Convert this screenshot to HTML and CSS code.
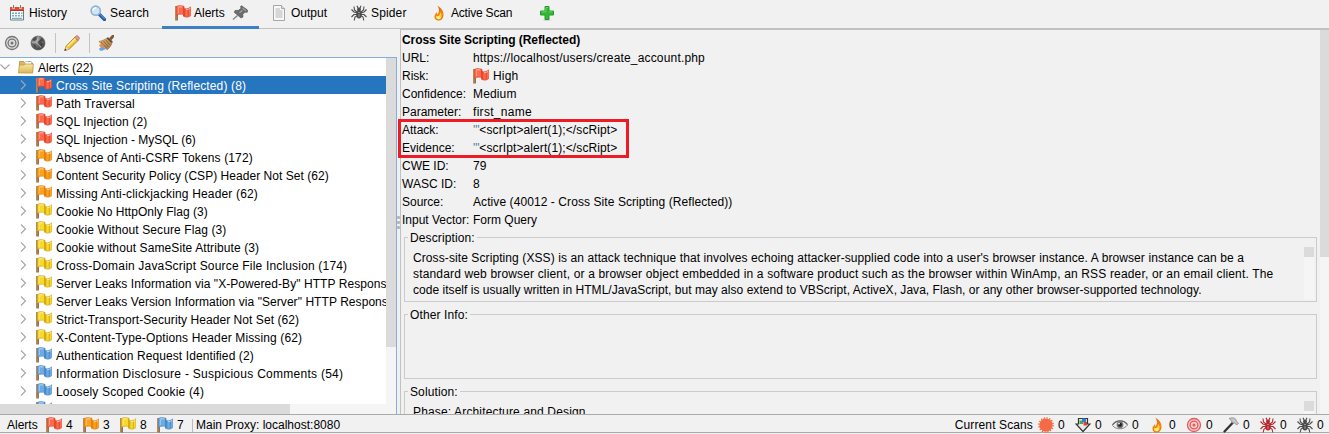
FILE: index.html
```
<!DOCTYPE html>
<html lang="en">
<head>
<meta charset="utf-8">
<title>Alerts</title>
<link rel="stylesheet" href="styles.css">
</head>
<body>
<svg class="defs" aria-hidden="true">
  <defs>
    <linearGradient id="fire" x1="0" y1="0" x2="0" y2="1"><stop offset="0" stop-color="#e35a10"/><stop offset=".55" stop-color="#f58a12"/><stop offset="1" stop-color="#e86a00"/></linearGradient>
    <linearGradient id="folder-g" x1="0" y1="0" x2="0" y2="1"><stop offset="0" stop-color="#fbe6a6"/><stop offset="1" stop-color="#dcb654"/></linearGradient>
    <linearGradient id="broom-g" x1="0" y1="0" x2="1" y2="1"><stop offset="0" stop-color="#e0b880"/><stop offset="1" stop-color="#a87238"/></linearGradient>
    <radialGradient id="globe-g" cx=".4" cy=".3" r=".8"><stop offset="0" stop-color="#aaa"/><stop offset="1" stop-color="#333"/></radialGradient>
    <symbol id="flag" viewBox="0 0 16 16">
      <path d="M1 1v14.500" stroke="#b58a5c" stroke-width="2"/>
      <path d="M2.300 9v6.500" stroke="#7b5230" stroke-width="1"/>
      <path class="flag-cloth" d="M1.500 1.300C3.500.3 6 .3 9 1.300V3.500C11.500 4.300 13.800 3.500 15.700 1.800V10.800C13.500 12.500 11 12.600 8.500 11.300V9.600C6 8.800 3.500 9.200 1.500 10.300Z"/>
      <path class="flag-fold" d="M8 1.200 9.200 1.500V3.600L10.300 3.800V11.800L8 11V9.500ZM12.800 3.500l1-.5v8.500l-1 .4Z"/>
      <path d="M3 2.300C4.500 1.700 6 1.700 7.300 2M11 4.600c1.500.1 2.700-.3 4-1.200" stroke="#fff" stroke-opacity=".6" stroke-width=".9" fill="none"/>
      <path d="M3.500 8V3" stroke="#fff" stroke-opacity=".3"/>
    </symbol>
    <symbol id="calendar" viewBox="0 0 16 16">
      <path d="M1.500 2.500h13v12.500h-13z" fill="#f5faff" stroke="#5f8199"/>
      <path d="M1 2h14v4H1z" fill="#e04a38"/><path d="M1 5.500h14" stroke="#b03a30"/>
      <path d="M4.500 0v4M11.500 0v4" stroke="#fff" stroke-width="2"/><path d="M4.500 0v3.500M11.500 0v3.500" stroke="#777"/>
      <path d="M3 7.500h2V9H3zm3 0h2V9H6zm3 0h2V9H9zM3 10h2v1.500H3zm3 0h2v1.500H6zm3 0h2v1.500H9z" fill="#79a5c7"/><path d="M12 7.500h1.500V9H12zm0 2.500h1.500v1.500H12zM3 12.700h10v1.200H3z" fill="#91ab9b"/>
    </symbol>
    <symbol id="search" viewBox="0 0 16 16">
      <path d="m9.500 9.500 5 5" stroke="#2859a7" stroke-width="3.200" stroke-linecap="round"/><path d="m10 9.300 4.700 4.700" stroke="#6aa2e5" stroke-width="1"/>
      <circle cx="5.700" cy="5.700" r="4.600" fill="#cfe5f7" stroke="#8fb0cf" stroke-width="1.600"/><path d="M3 5.500c.3-1.800 1.500-2.700 3-2.700" stroke="#fff" stroke-width="1.300" fill="none"/>
    </symbol>
    <symbol id="pin" viewBox="0 0 16 16">
      <path d="m5.500 10.500-4.500 4" stroke="#888" stroke-width="1.500"/>
      <path d="M9.500.7 15.500 5 15.300 7.300 13 7.200 10.800 9.300 11 12 9 13 2.200 7.300 3 5.500 6.500 5.300 9 3.300 8.500 1.500Z" fill="#6c6c6c" stroke="#505050" stroke-width=".6"/><path d="m7.500 7.700 3-2.500M10.500 3l3.500 2.700" stroke="#a0a0a0" stroke-width="1.200"/>
    </symbol>
    <symbol id="document" viewBox="0 0 16 16">
      <path d="M2.500.5h8l3 3v12h-11z" fill="#f8f8f8" stroke="#a6a6a6"/><path d="M10.500.5v3h3" fill="#ddd" stroke="#a6a6a6"/>
      <path d="M4.500 4h4.500M4.500 6h7M4.500 8h7M4.500 10h7M4.500 12h7" stroke="#b5b5b5"/>
    </symbol>
    <symbol id="spider" viewBox="0 0 16 16">
      <path d="M6 7 3.500 5 3 1.500M10 7l2.500-2 .5-3.500M6 8 3 7 .5 4.500M10 8l3-1 2.500-2.500M6 9.500 3 9.500.5 12M10 9.500h3l2.500 2.500M6.500 10.500 4 12l-.8 3.500M9.500 10.500 12 12l.8 3.500M7 3 6 .8M9 3l1-2.200" fill="none" stroke="currentColor" stroke-width="1.100"/>
      <circle cx="8" cy="4.600" r="2" fill="currentColor"/><ellipse cx="8" cy="9.500" rx="2.700" ry="4" fill="currentColor"/><path d="M7 8c.4-.8 1.500-.8 2 0M8 9v3" stroke="#fff" stroke-opacity=".45" fill="none"/>
    </symbol>
    <symbol id="flame" viewBox="0 0 16 16">
      <path d="M6.300.5C11 3.500 13 7 12.500 10.800 12 14 10 15.500 7.700 15.500 4.800 15.500 3.300 13.500 3.500 11.200 3.700 9 5 8.400 5.700 7.200 6.200 8 6 8.700 6.300 9.400 8.500 7.200 8.600 4 6.300.5Z" fill="url(#fire)"/>
      <path d="M9.300 7C9.500 9.500 8 10 7.300 11.300L5.300 10.700C4 13 5.800 14.500 7.800 14.500 10.500 14.500 11.700 11 9.300 7Z" fill="#ffd83c"/><ellipse cx="7.800" cy="12.600" rx="1.500" ry="1.500" fill="#fff4a0"/>
    </symbol>
    <symbol id="plus" viewBox="0 0 16 16">
      <ellipse cx="8" cy="15" rx="4" ry=".8" fill="#ccc"/><path d="M6 1.500h4V6h4.500v4H10v4.500H6V10H1.500V6H6z" fill="#35b735" stroke="#219a30"/><path d="M6.800 2.500h2.400M2.500 6.800h4.300V3M10 6.800h3.500" stroke="#76d96d" fill="none" stroke-width=".8"/>
    </symbol>
    <symbol id="target" viewBox="0 0 16 16">
      <circle cx="8" cy="8" r="6.500" fill="var(--paper)" stroke="currentColor" stroke-width="1.300"/><circle cx="8" cy="8" r="3.900" fill="none" stroke="currentColor" stroke-width="1.300"/><circle cx="8" cy="8" r="1.500" fill="currentColor"/>
    </symbol>
    <symbol id="globe" viewBox="0 0 16 16">
      <circle cx="8" cy="8" r="7" fill="url(#globe-g)" stroke="#555" stroke-width=".6"/><path d="m2 5 3-3 2 .5-.5 2.500-2 1ZM8 7l3.500-4 2 2.500L11 7l2 2-2 3-2-2ZM3 9l3 1-.5 3Z" fill="#333" fill-opacity=".7"/><path d="M2 7.500c3-1 6 0 9 5M8.500 1.500 6.500 7" stroke="#bbb" fill="none" stroke-width=".9"/>
    </symbol>
    <symbol id="pencil" viewBox="0 0 16 16">
      <path d="M.8 15.500 2 11.300l8.800-9L14 5.500l-9 8.800Z" fill="#f3c52d" stroke="#9a6c22" stroke-width=".8"/><path d="m10.800 2.300 1.500-1.500c1-.7 3.800 1.700 3 3L14 5.500Z" fill="#ec9b8d" stroke="#a35e50" stroke-width=".7"/><path d="m3.500 11.500 8-8" stroke="#fff29a" stroke-width="1.300"/><path d="m.8 15.500 1.200-4 3 2.800Z" fill="#f2d6a5"/><path d="m.4 15.800.7-2.300 1.600 1.500Z" fill="#333"/>
    </symbol>
    <symbol id="broom" viewBox="0 0 16 16">
      <path d="m12 4.500 3.200-3.500" stroke="#7d5c3c" stroke-width="3" stroke-linecap="round"/><path d="M1 6.500C4 6 7 4.500 10 2.500l4.500 3.800c-.7 3.500-2.500 6.500-5.500 8.500Z" fill="url(#broom-g)" stroke="#96663a" stroke-width=".6"/><path d="m3 7 5.500 6M5.500 6l4.800 6M7.800 5l4 5" stroke="#7e5228" stroke-width=".7"/><path d="m9.300 3 4.500 4.200" stroke="#4f4238" stroke-width="1.300"/><path d="m.8 10 3.700-1.500L6.500 12l-3 1.500Z" fill="#f28a3a"/><path d="m1 13.500 4-2 3 2.500-4 1.800H2Z" fill="#6aa5e5"/>
    </symbol>
    <symbol id="folder" viewBox="0 0 16 16">
      <path d="M1.500 13V2.500h4l1 1.500h8v9Z" fill="#dcb961" stroke="#b08b43" stroke-width=".8"/><path d="M7 2.500h6.500V6H7z" fill="#fff" stroke="#bba773" stroke-width=".5"/><path d="M10 2h2.500v1H10z" fill="#6aaed6"/><path d="M.5 14 1.300 6h5l1-1h8l-.6 9Z" fill="url(#folder-g)" stroke="#bd9948" stroke-width=".8"/>
    </symbol>
    <symbol id="burst" viewBox="0 0 16 16">
      <circle cx="8" cy="8" r="6.600" fill="#f66b45"/><circle cx="8" cy="8" r="7.100" fill="none" stroke="#ee6642" stroke-width="1.400" stroke-dasharray="1.400 1.400"/>
    </symbol>
    <symbol id="download" viewBox="0 0 16 16">
      <path d="M3.500 1.500h9V7H15l-7 7.500L1 7h2.500Z" fill="#e9e9e9" stroke="#333" stroke-width="1.200"/><path d="M4.500 3.500H8V7H4.500z" fill="#4aa94e"/><path d="M7 1.500h4V5H7z" fill="#377fc4"/><path d="M8.500 5H12v3.500H8.500z" fill="#d4453a"/>
    </symbol>
    <symbol id="eye" viewBox="0 0 16 16">
      <path d="M.5 8.500C4 2.500 12 2.500 15.500 8 12 13 4 13 .5 8.500Z" fill="#eee" stroke="#888" stroke-width="1"/><path d="M.5 7.800C4 2.500 12 2.500 15.500 7.500" fill="none" stroke="#666" stroke-width="1.200"/><circle cx="8" cy="7.800" r="3.400" fill="#777"/><circle cx="8" cy="7.800" r="2" fill="#222"/><circle cx="7" cy="6.600" r=".9" fill="#fff"/>
    </symbol>
    <symbol id="hammer" viewBox="0 0 16 16">
      <path d="m1.500 14.500 8-8.500" stroke="#333" stroke-width="2.300" stroke-linecap="round"/><path d="M6 1.500c3-1.200 5.500-.8 7 1l.2 1.500 2.300 2-1.700 2-2.400-2-1.600.2L8.300 4C8 2.700 7.200 2.200 6 1.500Z" fill="#c5c5c5" stroke="#858585" stroke-width=".7"/>
    </symbol>
  </defs>
</svg>

<div class="app">
  <nav class="tabs">
    <div class="tab tab-history"><svg class="icon"><use href="#calendar"/></svg><span>History</span></div>
    <div class="tab tab-search"><svg class="icon"><use href="#search"/></svg><span>Search</span></div>
    <div class="tab tab-alerts active"><svg class="icon high"><use href="#flag"/></svg><span>Alerts</span><svg class="icon pin"><use href="#pin"/></svg></div>
    <div class="tab tab-output"><svg class="icon"><use href="#document"/></svg><span>Output</span></div>
    <div class="tab tab-spider"><svg class="icon spider"><use href="#spider"/></svg><span>Spider</span></div>
    <div class="tab tab-scan"><svg class="icon"><use href="#flame"/></svg><span>Active Scan</span></div>
    <div class="tab tab-add"><svg class="icon"><use href="#plus"/></svg></div>
  </nav>

  <main class="split">
    <section class="left">
      <div class="toolbar">
        <svg class="icon target-gray"><use href="#target"/></svg>
        <svg class="icon"><use href="#globe"/></svg>
        <i class="rule"></i>
        <svg class="icon"><use href="#pencil"/></svg>
        <i class="rule"></i>
        <svg class="icon"><use href="#broom"/></svg>
      </div>
      <div class="tree">
        <div class="rows">
          <div class="row root"><svg class="chevron" viewBox="0 0 10 10"><path d="m.5 2.500 4.500 4.500 4.500-4.500"/></svg><svg class="icon"><use href="#folder"/></svg><span>Alerts (22)</span></div>
          <div class="row selected"><svg class="chevron" viewBox="0 0 10 10"><path d="m3 .5 4.500 4.500L3 9.500"/></svg><svg class="icon high"><use href="#flag"/></svg><span>Cross Site Scripting (Reflected) (8)</span></div>
          <div class="row"><svg class="chevron" viewBox="0 0 10 10"><path d="m3 .5 4.500 4.500L3 9.500"/></svg><svg class="icon high"><use href="#flag"/></svg><span>Path Traversal</span></div>
          <div class="row"><svg class="chevron" viewBox="0 0 10 10"><path d="m3 .5 4.500 4.500L3 9.500"/></svg><svg class="icon high"><use href="#flag"/></svg><span>SQL Injection (2)</span></div>
          <div class="row"><svg class="chevron" viewBox="0 0 10 10"><path d="m3 .5 4.500 4.500L3 9.500"/></svg><svg class="icon high"><use href="#flag"/></svg><span>SQL Injection - MySQL (6)</span></div>
          <div class="row"><svg class="chevron" viewBox="0 0 10 10"><path d="m3 .5 4.500 4.500L3 9.500"/></svg><svg class="icon medium"><use href="#flag"/></svg><span>Absence of Anti-CSRF Tokens (172)</span></div>
          <div class="row"><svg class="chevron" viewBox="0 0 10 10"><path d="m3 .5 4.500 4.500L3 9.500"/></svg><svg class="icon medium"><use href="#flag"/></svg><span>Content Security Policy (CSP) Header Not Set (62)</span></div>
          <div class="row"><svg class="chevron" viewBox="0 0 10 10"><path d="m3 .5 4.500 4.500L3 9.500"/></svg><svg class="icon medium"><use href="#flag"/></svg><span>Missing Anti-clickjacking Header (62)</span></div>
          <div class="row"><svg class="chevron" viewBox="0 0 10 10"><path d="m3 .5 4.500 4.500L3 9.500"/></svg><svg class="icon low"><use href="#flag"/></svg><span>Cookie No HttpOnly Flag (3)</span></div>
          <div class="row"><svg class="chevron" viewBox="0 0 10 10"><path d="m3 .5 4.500 4.500L3 9.500"/></svg><svg class="icon low"><use href="#flag"/></svg><span>Cookie Without Secure Flag (3)</span></div>
          <div class="row"><svg class="chevron" viewBox="0 0 10 10"><path d="m3 .5 4.500 4.500L3 9.500"/></svg><svg class="icon low"><use href="#flag"/></svg><span>Cookie without SameSite Attribute (3)</span></div>
          <div class="row"><svg class="chevron" viewBox="0 0 10 10"><path d="m3 .5 4.500 4.500L3 9.500"/></svg><svg class="icon low"><use href="#flag"/></svg><span>Cross-Domain JavaScript Source File Inclusion (174)</span></div>
          <div class="row"><svg class="chevron" viewBox="0 0 10 10"><path d="m3 .5 4.500 4.500L3 9.500"/></svg><svg class="icon low"><use href="#flag"/></svg><span>Server Leaks Information via "X-Powered-By" HTTP Respons</span></div>
          <div class="row"><svg class="chevron" viewBox="0 0 10 10"><path d="m3 .5 4.500 4.500L3 9.500"/></svg><svg class="icon low"><use href="#flag"/></svg><span>Server Leaks Version Information via "Server" HTTP Respons</span></div>
          <div class="row"><svg class="chevron" viewBox="0 0 10 10"><path d="m3 .5 4.500 4.500L3 9.500"/></svg><svg class="icon low"><use href="#flag"/></svg><span>Strict-Transport-Security Header Not Set (62)</span></div>
          <div class="row"><svg class="chevron" viewBox="0 0 10 10"><path d="m3 .5 4.500 4.500L3 9.500"/></svg><svg class="icon low"><use href="#flag"/></svg><span>X-Content-Type-Options Header Missing (62)</span></div>
          <div class="row"><svg class="chevron" viewBox="0 0 10 10"><path d="m3 .5 4.500 4.500L3 9.500"/></svg><svg class="icon info"><use href="#flag"/></svg><span>Authentication Request Identified (2)</span></div>
          <div class="row"><svg class="chevron" viewBox="0 0 10 10"><path d="m3 .5 4.500 4.500L3 9.500"/></svg><svg class="icon info"><use href="#flag"/></svg><span>Information Disclosure - Suspicious Comments (54)</span></div>
          <div class="row"><svg class="chevron" viewBox="0 0 10 10"><path d="m3 .5 4.500 4.500L3 9.500"/></svg><svg class="icon info"><use href="#flag"/></svg><span>Loosely Scoped Cookie (4)</span></div>
          <div class="row"><i class="chevron"></i><svg class="icon info"><use href="#flag"/></svg></div>
        </div>
        <div class="track-y"><i class="thumb-y"></i></div>
        <div class="track-x"><i class="thumb-x"></i></div>
      </div>
    </section>

    <div class="divider"><i></i><i></i><i></i></div>

    <section class="details">
      <div class="content">
        <h1 class="title">Cross Site Scripting (Reflected)</h1>
        <dl class="fields">
          <dt>URL:</dt><dd class="url">https://localhost/users/create_account.php</dd>
          <dt>Risk:</dt><dd class="risk"><svg class="icon high"><use href="#flag"/></svg><span>High</span></dd>
          <dt>Confidence:</dt><dd class="confidence">Medium</dd>
          <dt>Parameter:</dt><dd class="parameter">first_name</dd>
          <dt>Attack:</dt><dd class="payload"><b class="quotes">'"</b>&lt;scrIpt&gt;alert(1);&lt;/scRipt&gt;</dd>
          <dt>Evidence:</dt><dd class="payload"><b class="quotes">'"</b>&lt;scrIpt&gt;alert(1);&lt;/scRipt&gt;</dd>
          <dt>CWE ID:</dt><dd>79</dd>
          <dt>WASC ID:</dt><dd>8</dd>
          <dt>Source:</dt><dd class="source">Active (40012 - Cross Site Scripting (Reflected))</dd>
          <dt>Input Vector:</dt><dd>Form Query</dd>
        </dl>
        <div class="highlight"></div>
        <section class="group">
          <h2 class="legend">Description:</h2>
          <div class="prose description">
            <p>Cross-site Scripting (XSS) is an attack technique that involves echoing attacker-supplied code into a user's browser instance. A browser instance can be a</p>
            <p>standard web browser client, or a browser object embedded in a software product such as the browser within WinAmp, an RSS reader, or an email client. The</p>
            <p>code itself is usually written in HTML/JavaScript, but may also extend to VBScript, ActiveX, Java, Flash, or any other browser-supported technology.</p>
          </div>
          <div class="mini-track"><i></i></div>
        </section>
        <section class="group"><h2 class="legend">Other Info:</h2></section>
        <section class="group">
          <h2 class="legend">Solution:</h2>
          <div class="prose solution"><p>Phase: Architecture and Design</p></div>
          <div class="mini-track"><i></i></div>
        </section>
      </div>
      <div class="details-track"><i></i></div>
    </section>
  </main>

  <footer class="status">
    <span class="status-label">Alerts</span>
    <span class="count"><svg class="icon high"><use href="#flag"/></svg>4</span>
    <span class="count"><svg class="icon medium"><use href="#flag"/></svg>3</span>
    <span class="count"><svg class="icon low"><use href="#flag"/></svg>8</span>
    <span class="count"><svg class="icon info"><use href="#flag"/></svg>7</span>
    <span class="proxy">Main Proxy: localhost:8080</span>
    <span class="scans">Current Scans</span>
    <span class="count"><svg class="icon"><use href="#burst"/></svg>0</span>
    <span class="count"><svg class="icon"><use href="#download"/></svg>0</span>
    <span class="count"><svg class="icon"><use href="#eye"/></svg>0</span>
    <span class="count"><svg class="icon"><use href="#flame"/></svg>0</span>
    <span class="count"><svg class="icon target-red"><use href="#target"/></svg>0</span>
    <span class="count"><svg class="icon"><use href="#hammer"/></svg>0</span>
    <span class="count"><svg class="icon spider-red"><use href="#spider"/></svg>0</span>
    <span class="count"><svg class="icon spider"><use href="#spider"/></svg>0</span>
  </footer>
</div>
</body>
</html>
```
FILE: styles.css
```
* { box-sizing: border-box; }
body { margin: 0; background: #f1f1f1; color: #000; font: 12px/18px "Liberation Sans", Arial, sans-serif; overflow: hidden; }
h1, h2, p, dl, dd { margin: 0; font-size: 12px; font-weight: normal; }
.defs { position: absolute; width: 0; height: 0; }
.app { width: 1329px; height: 434px; display: flex; flex-direction: column; white-space: nowrap; }
.icon { width: 16px; height: 16px; flex: none; display: block; }
.flag-cloth { fill: var(--cloth); stroke: var(--fold); stroke-width: .5px; }
.flag-fold { fill: var(--fold); fill-opacity: .75; }
.high { --cloth: #fc694b; --fold: #dc3d26; }
.medium { --cloth: #fba11e; --fold: #d97a08; }
.low { --cloth: #f7d82d; --fold: #c89d0c; }
.info { --cloth: #6daae3; --fold: #3c7fbd; }
.spider { color: #4b4b4b; }
.spider-red { color: #b6262b; }
.target-gray { color: #747474; --paper: #ddd; }
.target-red { color: #e3585b; --paper: #fbd0cc; }

.tabs { height: 29px; flex: none; display: flex; border-bottom: 1px solid #c1c1c1; }
.tab { height: 29px; display: flex; align-items: center; gap: 3px; padding-bottom: 3px; flex: none; }
.tab-history { width: 81px; padding-left: 9px; gap: 4px; letter-spacing: .12px; }
.tab-search { width: 81px; padding-left: 9px; gap: 4px; letter-spacing: .2px; }
.tab-alerts { width: 97px; padding-left: 13px; }
.active { border-bottom: 3px solid #3d80c5; padding-bottom: 0; }
.pin { margin-left: 4px; }
.tab-output { width: 80px; padding-left: 12px; gap: 4px; }
.tab-spider { width: 82px; padding-left: 12px; gap: 4px; letter-spacing: .15px; }
.tab-scan { width: 98px; padding-left: 10px; gap: 4px; letter-spacing: -.2px; }
.tab-add { padding-left: 20px; }

.split { height: 386px; flex: none; display: flex; border-bottom: 1px solid #aaa; overflow: hidden; }
.left { width: 397px; flex: none; }
.toolbar { height: 28px; display: flex; align-items: center; gap: 10px; padding-left: 4px; }
.toolbar .rule { width: 1px; height: 20px; background: #c4c4c4; margin: 0 -2px 0 -1px; }
.tree { height: 358px; border: 1px solid #88addb; border-left: 0; background: #fff; display: grid; grid-template: 346px 10px / 386px 10px; }
.rows { overflow: hidden; }
.row { height: 18px; display: flex; align-items: center; gap: 4px; padding-left: 18px; }
.row span { padding-top: 2px; }
.row.root { padding-left: 0; }
.selected { background: #2675bf; color: #fff; }
/* tracking of each alert name */
.row:nth-child(2), .row:nth-child(6), .row:nth-child(16) { letter-spacing: .13px; }
.row:nth-child(3), .row:nth-child(4), .row:nth-child(10), .row:nth-child(11), .row:nth-child(17) { letter-spacing: .1px; }
.row:nth-child(7), .row:nth-child(9) { letter-spacing: .04px; }
.row:nth-child(8), .row:nth-child(19) { letter-spacing: .16px; }
.row:nth-child(12) { letter-spacing: .18px; }
.row:nth-child(13), .row:nth-child(14), .row:nth-child(15) { letter-spacing: .06px; }
.row:nth-child(18) { letter-spacing: .27px; }
.chevron { width: 10px; height: 10px; margin-right: 4px; flex: none; fill: none; stroke: #a5a5a5; stroke-width: 1.100px; }
.track-y { background: #f5f5f5; grid-row: 1 / 3; grid-column: 2; }
.thumb-y { display: block; height: 289px; background: #dbdbdb; }
.track-x { background: #f5f5f5; }
.thumb-x { display: block; width: 290px; height: 10px; background: #dbdbdb; }
.divider { width: 3px; flex: none; padding-top: 187px; display: flex; flex-direction: column; gap: 2px; }
.divider i { width: 3px; height: 3px; border-radius: 1px; background: #b5b5b5; flex: none; }

.details { width: 929px; border-left: 1px solid #c1c1c1; border-top: 1px solid #c1c1c1; display: flex; }
.content { width: 919px; padding: 1px 3px 0 1px; position: relative; flex: none; }
.title { font-weight: bold; letter-spacing: -.06px; }
.fields { display: grid; grid-template-columns: 71px 1fr; grid-auto-rows: 18px; margin-bottom: 8px; }
.url { letter-spacing: .17px; }
.risk { display: flex; align-items: center; gap: 4px; letter-spacing: .2px; }
.confidence { letter-spacing: .15px; }
.parameter { letter-spacing: .3px; }
.payload { letter-spacing: .1px; }
.source { letter-spacing: .08px; }
.quotes { color: #4a7ba8; font-weight: normal; letter-spacing: -.1px; }
/* callout drawn over the payload rows */
.highlight { position: absolute; left: -3px; top: 89px; width: 231px; height: 39px; border: 3px solid #ed1c24; }
.group { height: 65px; margin: 0 0 12px 2px; border: 1px solid #cbcbcb; display: grid; grid-template: 9px 1fr / 1fr 10px; padding: 0 2px 2px 0; }
.legend { grid-column: 1 / 3; height: 18px; margin: -9px 0 0 3px; justify-self: start; padding: 0 2px; background: #f1f1f1; letter-spacing: .12px; }
.prose { padding: 3px 0 0 8px; line-height: 16px; }
.description p:nth-child(1) { letter-spacing: .093px; }
.description p:nth-child(2) { letter-spacing: .158px; }
.description p:nth-child(3) { letter-spacing: .034px; }
.solution { letter-spacing: .15px; }
.mini-track { background: #f5f5f5; }
.mini-track i { display: block; width: 10px; height: 10px; background: #dbdbdb; }
.details-track { width: 9px; background: #f5f5f5; }
.details-track i { display: block; height: 227px; background: #dbdbdb; }

.status { height: 18px; flex: none; display: flex; align-items: center; border-bottom: 1px solid #aaa; padding: 3px 0 0 7px; }
.status-label { width: 39px; }
.count { width: 37px; display: flex; align-items: center; gap: 4px; flex: none; }
.proxy { border-left: 1px solid #bbb; padding-left: 3px; margin-left: -2px; line-height: 13px; }
.scans { margin-left: auto; margin-right: 5px; letter-spacing: .12px; }
.count:last-child { width: 32px; }
```
